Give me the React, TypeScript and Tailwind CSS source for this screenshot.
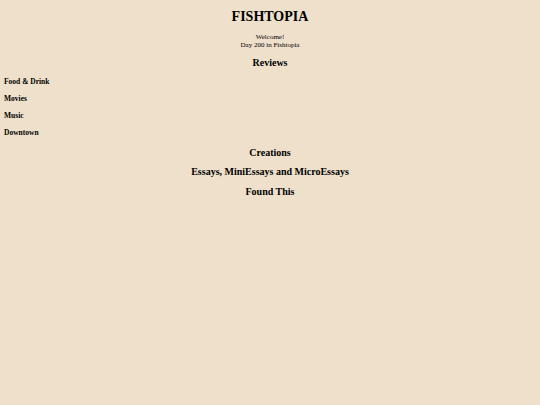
export default function App() {
    const reviews = ["Food & Drink", "Movies", "Music", "Downtown"];
    const sections = ["Creations", "Essays, MiniEssays and MicroEssays", "Found This"];

    return (
        <div className="min-h-[405px] w-full bg-[#eee0cb] text-black" style={{ fontFamily: '"Liberation Serif", "Times New Roman", serif' }}>
            <div className="pt-[9px]">
                <h1 className="text-center text-[14px] leading-[16px] font-bold">FISHTOPIA</h1>

                <div className="mt-[8px] text-center text-[7px] leading-[8px]">
                    <div>Welcome!</div>
                    <div>Day 200 in Fishtopia</div>
                </div>

                <h2 className="mt-[8px] text-center text-[10px] leading-[12px] font-bold">Reviews</h2>

                {/* Review categories */}
                <div className="mt-[8px] flex flex-col gap-[8px] px-[4px]">
                    {reviews.map((r) => (
                        <h3 key={r} className="text-[7.5px] leading-[9px] font-bold">
                            {r}
                        </h3>
                    ))}
                </div>

                <div className="mt-[9.5px] flex flex-col gap-[7.5px]">
                    {sections.map((s) => (
                        <h2 key={s} className="text-center text-[10px] leading-[12px] font-bold">
                            {s}
                        </h2>
                    ))}
                </div>
            </div>
        </div>
    );
}
